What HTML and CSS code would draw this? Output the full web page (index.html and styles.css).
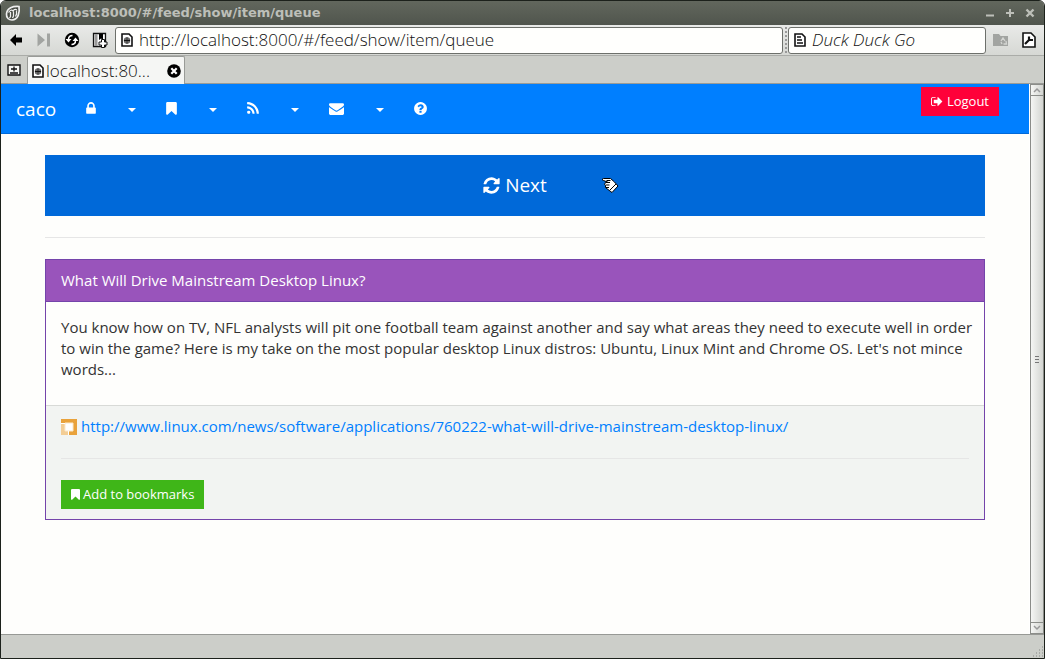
FILE: index.html
```html
<!DOCTYPE html>
<html lang="en">
<head>
<meta charset="utf-8">
<meta name="viewport" content="width=device-width, initial-scale=1">
<title>localhost:8000/#/feed/show/item/queue</title>
<link rel="stylesheet" href="styles.css">
</head>
<body>
<svg class="defs" aria-hidden="true">
  <symbol id="page-globe" viewBox="0 0 12 14"><path d="M1 1h7l3 3v9H1z" fill="#fff" stroke="#111" stroke-width="1.600"/><circle cx="6" cy="7.500" r="3.200" fill="#555"/><path d="M3 7.500h6M6 4.500v6" stroke="#111" stroke-width="1"/><path d="M3.500 6h5M3.500 9h5" stroke="#bbb" stroke-width=".5"/></symbol>
  <symbol id="bookmark" viewBox="256 0 1280 1792"><path fill="currentColor" d="M1420 128q23 0 44 9 33 13 52.500 41t19.500 62v1289q0 34-19.500 62t-52.500 41q-19 8-44 8-48 0-83-32l-441-424-441 424q-36 33-83 33-23 0-44-9-33-13-52.500-41t-19.500-62v-1289q0-34 19.500-62t52.500-41q21-9 44-9h1048z"/></symbol>
</svg>
<div class="window">
  <header class="titlebar">
    <svg class="app-icon" viewBox="0 0 16 16" aria-hidden="true"><path d="M14 1.500C8 1 2 3 1.500 9c-.3 4 2.500 6 5.500 6 6 0 8-7 7-13.500z" fill="#454942" stroke="#eee" stroke-width="1.700"/><path d="M3.500 7.500C5 5 7 4.500 8 6c1.500-2 3-2 4-.5M5.500 7v4.500l-1 1.500M8.500 6.500V11l-1 2M11.500 6v3l-1 2.500" fill="none" stroke="#eee" stroke-width="1.300"/></svg>
    <span class="window-title">localhost:8000/#/feed/show/item/queue</span>
    <button class="win-btn" aria-label="Minimize"><svg viewBox="0 0 10 10"><path d="M1 7.500h8" stroke-width="2"/></svg></button>
    <button class="win-btn" aria-label="Maximize"><svg viewBox="0 0 10 10"><path d="M1 5h8M5 1v8" stroke-width="2"/></svg></button>
    <button class="win-btn" aria-label="Close window"><svg viewBox="0 0 10 10"><path d="M1.500 1.500l7 7M8.500 1.500l-7 7" stroke-width="2.400"/></svg></button>
  </header>
  <div class="toolbar">
    <div class="tools">
      <button class="tool" aria-label="Back"><svg viewBox="0 0 16 16"><path d="M2 8l6-6v3.500h6v5H8V14z"/></svg></button>
      <button class="tool" aria-label="Forward" disabled><svg viewBox="0 0 16 16"><path d="M1.500 1.500L9 8l-7.500 6.500zM11 1.500h3v13h-3z" fill="#a2a4a1"/></svg></button>
      <button class="tool" aria-label="Reload"><svg viewBox="0 0 16 16"><circle cx="8" cy="8" r="7.200"/><path d="M4.500 7.500C4.500 5 6 3.500 8.500 3.500M11.500 8.500c0 2.500-1.500 4-4 4" fill="none" stroke="#fff" stroke-width="1.500"/><path d="M1.500 7h6l-3 3.500zM8.500 9h6l-3-3.500z" fill="#fff"/></svg></button>
      <button class="tool" aria-label="Add bookmark"><svg viewBox="0 0 16 16"><path d="M1.500 1.500h12v13h-12z" fill="#fff" stroke="#111" stroke-width="1.300"/><path d="M2.500 2h3v12h-3z" fill="#999"/><path d="M7 2h4v6L9 6.500 7 8z"/><path d="M9.500 7.500h3V10H15v3h-2.500v2.500h-3V13H7v-3h2.500z" fill="#fff" stroke="#111"/></svg></button>
    </div>
    <label class="field address"><svg viewBox="0 0 12 14" aria-hidden="true"><use href="#page-globe"/></svg><input type="text" aria-label="Address" value="http://localhost:8000/#/feed/show/item/queue"></label>
    <span class="grip"></span>
    <label class="field search"><svg viewBox="0 0 12 14" aria-hidden="true"><path d="M1 1h7l3 3v9H1z" fill="#fff" stroke="#111" stroke-width="1.600"/><path d="M3 4h4M3 7h5M3 10h6" stroke="#111" stroke-width="1.400"/></svg><input type="text" aria-label="Search" placeholder="Duck Duck Go"></label>
    <div class="tools tools-end">
      <button class="tool" aria-label="Restore closed tab" disabled><svg viewBox="0 0 16 16"><path d="M0 2h6l1.500 2H15v10H0z" fill="#a2a4a1"/><path d="M8 9l2-3 2 3M13 9l.5 3h-3M8 10l1 2" fill="none" stroke="#d5d6d3" stroke-width="1.300"/></svg></button>
      <button class="tool" aria-label="Settings"><svg viewBox="0 0 16 16"><path d="M2 1h8l4 4v10H2z" fill="#fff" stroke="#111" stroke-width="1.600"/><path d="M4 12l4-4M8 4.500V8h4" fill="none" stroke="#111" stroke-width="2.200"/></svg></button>
    </div>
  </div>
  <div class="tabbar">
    <button class="new-tab" aria-label="New tab"><svg viewBox="0 0 14 12"><path d="M1 1h12v10H1z" fill="#f6f7f5" stroke="#111" stroke-width="1.400"/><path d="M4 5h6M7 2.500v5M3 9h8" stroke="#111" stroke-width="1.300"/></svg></button>
    <div class="tab">
      <svg class="tab-icon" viewBox="0 0 12 14" aria-hidden="true"><use href="#page-globe"/></svg>
      <span class="tab-title">localhost:80...</span>
      <button class="tab-close" aria-label="Close tab"><svg viewBox="0 0 14 14"><circle cx="7" cy="7" r="6.800"/><path d="M4.300 4.300l5.400 5.400M9.700 4.300L4.300 9.700" stroke="#fff" stroke-width="2.200"/></svg></button>
    </div>
  </div>
  <div class="viewport">
    <div class="page">
      <nav class="navbar">
        <a class="brand" href="#">caco</a>
        <a class="nav-link" href="#" aria-label="Account"><svg width="10" height="15" viewBox="320 0 1152 1792"><path d="M640 768h512v-192q0-106-75-181t-181-75-181 75-75 181v192zm832 96v576q0 40-28 68t-68 28h-960q-40 0-68-28t-28-68v-576q0-40 28-68t68-28h32v-192q0-184 132-316t316-132 316 132 132 316v192h32q40 0 68 28t28 68z"/></svg></a>
        <button class="nav-link" aria-label="Account menu"><span class="caret"></span></button>
        <a class="nav-link" href="#" aria-label="Bookmarks"><svg width="11" height="15"><use href="#bookmark"/></svg></a>
        <button class="nav-link" aria-label="Bookmarks menu"><span class="caret"></span></button>
        <a class="nav-link" href="#" aria-label="Feeds"><svg width="12" height="15" viewBox="192 0 1408 1792"><path d="M576 1344q0 80-56 136t-136 56-136-56-56-136 56-136 136-56 136 56 56 136zm512 123q2 28-17 48-18 21-47 21h-135q-25 0-43-16.500t-20-41.500q-22-229-184.500-391.500t-391.500-184.500q-25-2-41.500-20t-16.500-43v-135q0-29 21-47 17-17 43-17h5q160 13 306 80.500t259 181.500q114 113 181.500 259t80.500 306zm512 2q2 27-18 47-18 20-46 20h-143q-26 0-44.500-17.500t-19.500-42.500q-12-215-101-408.500t-231.500-336-336-231.500-408.500-102q-25-1-42.500-19.500t-17.500-43.500v-143q0-28 20-46 18-18 44-18h3q262 13 501.500 120t425.500 294q187 186 294 425.500t120 501.500z"/></svg></a>
        <button class="nav-link" aria-label="Feeds menu"><span class="caret"></span></button>
        <a class="nav-link" href="#" aria-label="Mail"><svg width="15" height="15" viewBox="0 0 1792 1792"><path d="M1792 710v794q0 66-47 113t-113 47h-1472q-66 0-113-47t-47-113v-794q44 49 101 87 362 246 497 345 57 42 92.500 65.500t94.500 48 110 24.500h2q51 0 110-24.500t94.500-48 92.500-65.500q170-123 498-345 57-39 100-87zm0-294q0 79-49 151t-122 123q-376 261-468 325-10 7-42.500 31t-54 38.500-52 32.500-57.500 27-50 9h-2q-23 0-50-9t-57.500-27-52-32.500-54-38.500-42.500-31q-91-64-262-182.500t-205-142.500q-62-42-117-115.500t-55-136.500q0-78 41.500-130t118.500-52h1472q65 0 112.500 47t47.500 113z"/></svg></a>
        <button class="nav-link" aria-label="Mail menu"><span class="caret"></span></button>
        <a class="nav-link" href="#" aria-label="Help"><svg width="13" height="15" viewBox="128 0 1536 1792"><path d="M1024 1376v-192q0-14-9-23t-23-9h-192q-14 0-23 9t-9 23v192q0 14 9 23t23 9h192q14 0 23-9t9-23zm256-672q0-88-55.500-163t-138.500-116-170-41q-243 0-371 213-15 24 8 42l132 100q7 6 19 6 16 0 25-12 53-68 86-92 34-24 86-24 48 0 85.500 26t37.500 59q0 38-20 61t-68 45q-63 28-115.500 86.500t-52.500 125.500v36q0 14 9 23t23 9h192q14 0 23-9t9-23q0-19 21.500-49.500t54.500-49.500q32-18 49-28.500t46-35 44.500-48 28-60.500 12.500-81zm384 192q0 209-103 385.500t-279.500 279.500-385.500 103-385.500-103-279.500-279.500-103-385.500 103-385.500 279.500-279.500 385.500-103 385.500 103 279.500 279.500 103 385.500z"/></svg></a>
        <button class="btn btn-danger"><svg width="12" height="13" viewBox="64 0 1664 1792"><path d="M704 1440q0 4 1 20t.5 26.500-3 23.500-10 19.500-20.500 6.500h-320q-119 0-203.500-84.500t-84.500-203.500v-704q0-119 84.500-203.500t203.500-84.500h320q13 0 22.500 9.500t9.500 22.500q0 4 1 20t.5 26.500-3 23.500-10 19.500-20.500 6.500h-320q-66 0-113 47t-47 113v704q0 66 47 113t113 47h312l11.500 1 11.500 3 8 5.500 7 9 2 13.500zm928-544q0 26-19 45l-544 544q-19 19-45 19t-45-19-19-45v-288h-448q-26 0-45-19t-19-45v-384q0-26 19-45t45-19h448v-288q0-26 19-45t45-19 45 19l544 544q19 19 19 45z"/></svg><span>Logout</span></button>
      </nav>
      <main class="container">
        <button class="btn-next"><svg width="17" height="19" viewBox="128 0 1536 1792"><path d="M1639 1056q0 5-1 7-64 268-268 434.500t-478 166.500q-146 0-282.500-55t-243.500-157l-129 129q-19 19-45 19t-45-19-19-45v-448q0-26 19-45t45-19h448q26 0 45 19t19 45-19 45l-137 137q71 66 161 102t187 36q134 0 250-65t186-179q11-17 53-117 8-23 30-23h192q13 0 22.500 9.500t9.500 22.500zm25-800v448q0 26-19 45t-45 19h-448q-26 0-45-19t-19-45 19-45l138-138q-148-137-349-137-134 0-250 65t-186 179q-11 17-53 117-8 23-30 23h-199q-13 0-22.500-9.500t-9.500-22.500v-7q65-268 270-434.500t480-166.500q146 0 284 55.500t245 156.500l130-129q19-19 45-19t45 19 19 45z"/></svg><span>Next</span></button>
        <hr>
        <article class="panel">
          <h1 class="panel-heading">What Will Drive Mainstream Desktop Linux?</h1>
          <div class="panel-body">
            <p>You know how on TV, NFL analysts will pit one football team against another and say what areas they need to execute well in order to win the game? Here is my take on the most popular desktop Linux distros: Ubuntu, Linux Mint and Chrome OS. Let's not mince words...</p>
          </div>
          <footer class="panel-footer">
            <div class="source">
              <svg width="16" height="16" viewBox="0 0 16 16" aria-hidden="true"><path d="M0 0h16v16H8V4H0z" fill="#e9a23b"/><path d="M0 4h8v12H0z" fill="#f3cd95"/><path d="M4 4h8v8H4z" fill="#fff" stroke="#fbe8cb"/><path d="M0 4.500h4M7.500 12v4" stroke="#fff"/></svg>
              <a href="http://www.linux.com/news/software/applications/760222-what-will-drive-mainstream-desktop-linux/">http://www.linux.com/news/software/applications/760222-what-will-drive-mainstream-desktop-linux/</a>
            </div>
            <hr>
            <button class="btn btn-success"><svg width="9" height="13"><use href="#bookmark"/></svg><span>Add to bookmarks</span></button>
          </footer>
        </article>
      </main>
    </div>
    <div class="scrollbar" aria-hidden="true">
      <span class="scroll-end"><svg viewBox="0 0 8 6"><path d="M1 5l3-3 3 3"/></svg></span>
      <span class="scroll-thumb"><svg viewBox="0 0 6 8"><path d="M1 1.500h4M1 4.500h4M1 7.500h4"/></svg></span>
      <span class="scroll-end"><svg viewBox="0 0 8 6"><path d="M1 1l3 3 3-3"/></svg></span>
    </div>
  </div>
  <div class="statusbar"><svg width="12" height="12" viewBox="0 0 12 12" aria-hidden="true"><path d="M10 1h1M7 4h1M10 4h1M4 7h1M7 7h1M10 7h1M1 10h1M4 10h1M7 10h1M10 10h1" stroke="#858784"/></svg></div>
  <svg class="pointer" viewBox="0 0 18 18" aria-hidden="true"><path d="M2.500 1.500h7l4 3.500 3.500 4-6 6.500L7 12.500l-2.500-2v-2L3.500 7.500l1-2 2-.5-4-1.500-1.500-1z" fill="#fff" stroke="#000"/><path d="M5.500 3.500h4M5 5.500h4M4.500 8h4M5 10.500h3M15 7l-6 6" fill="none" stroke="#000"/></svg>
</div>
</body>
</html>
```
FILE: styles.css
```css
* { box-sizing: border-box; }

body {
  margin: 0;
  background: #fff;
  color: #333;
  font: 15px/21px "Open Sans", sans-serif;
}

button { margin: 0; padding: 0; border: 0; background: none; font: inherit; color: inherit; }
svg { display: block; fill: currentColor; }
.defs { position: absolute; width: 0; height: 0; }

.window {
  position: relative;
  display: flex;
  flex-direction: column;
  min-height: 100vh;
  border: 1px solid #1c211b;
  border-radius: 6px 6px 0 0;
  background: #cccec9;
  overflow: hidden;
}

/* Browser chrome */
.titlebar {
  display: flex;
  align-items: center;
  gap: 10px;
  height: 24px;
  padding: 0 9px 0 4px;
  background: linear-gradient(#62675d, #50554d);
  color: #bdbfb9;
  font: bold 13px/24px "DejaVu Sans", sans-serif;
}
.app-icon { width: 16px; height: 16px; }
.window-title { flex: 1; margin-left: -2px; }
.win-btn svg { width: 10px; height: 10px; stroke: currentColor; }

.toolbar {
  display: flex;
  align-items: center;
  height: 31px;
  padding: 0 7px;
  border-bottom: 1px solid #aaaca8;
  background: linear-gradient(#e9eae8, #d6d8d4);
}
.tools { display: flex; gap: 12px; margin-right: 7px; }
.tools-end { margin: 0 0 0 7px; }
.tool svg { width: 16px; height: 16px; fill: #000; }
.field {
  display: flex;
  align-items: center;
  gap: 6px;
  height: 27px;
  padding: 0 5px;
  border: 1px solid #6d706b;
  border-radius: 3px;
  background: #fffffd;
}
.field svg { width: 12px; height: 14px; }
.field input {
  flex: 1;
  min-width: 0;
  padding: 0;
  border: 0;
  outline: 0;
  background: none;
  color: #111;
  font: 300 17px/24px "Open Sans", sans-serif;
}
.address { flex: 1; }
.search { width: 198px; }
.search input::placeholder { color: #111; font-style: italic; opacity: 1; }
.grip { height: 26px; margin: 0 1px 0 2px; border-left: 2px dotted #999; }

.tabbar {
  display: flex;
  height: 28px;
  border-bottom: 1px solid #999b97;
}
.new-tab { padding: 0 6px; }
.new-tab svg { width: 14px; height: 12px; }
.tab {
  display: flex;
  align-items: center;
  width: 158px;
  height: 28px;
  padding: 0 3px 0 4px;
  border: 1px solid #999b97;
  border-bottom: 0;
  border-radius: 2px 2px 0 0;
  background: #f5f6f4;
  color: #111;
  font: 300 17px/24px "Open Sans", sans-serif;
}
.tab-icon { width: 12px; height: 14px; margin-right: 2px; }
.tab-title { flex: 1; white-space: nowrap; }
.tab-close svg { width: 14px; height: 14px; fill: #000; }

.viewport { display: flex; flex: 1; }
.page { flex: 1; min-width: 0; background: #fefefc; }
.statusbar {
  display: flex;
  justify-content: flex-end;
  align-items: flex-end;
  height: 24px;
  border-top: 1px solid #979995;
}

.scrollbar {
  display: flex;
  flex-direction: column;
  width: 15px;
  padding-left: 1px;
  background: #fff;
}
.scroll-end, .scroll-thumb {
  display: flex;
  justify-content: center;
  align-items: center;
  border: 1px solid #8b8d89;
  background: linear-gradient(90deg, #f5f6f4, #d3d5d1);
}
.scroll-end { height: 12px; }
.scroll-thumb { flex: 1; border-width: 0 1px; }
.scroll-end svg { width: 8px; height: 6px; fill: none; stroke: #999; stroke-width: 1.5; }
.scroll-thumb svg { width: 6px; height: 8px; stroke: #777; }

/* Application */
.navbar {
  display: flex;
  align-items: stretch;
  height: 50px;
  padding-right: 30px;
  border-bottom: 1px solid #0069d9;
  background: #007fff;
  color: #fff;
}
.brand {
  padding: 15px;
  color: #fff;
  font-size: 19px;
  line-height: 21px;
  text-decoration: none;
}
.nav-link { display: flex; align-items: center; padding: 0 15px; color: #fff; }
.caret {
  margin: 2px 0 0 2px;
  border: 4px solid transparent;
  border-top-color: #fff;
  border-bottom: 0;
}
.btn {
  display: inline-flex;
  align-items: center;
  height: 29px;
  padding: 0 10px;
  color: #fff;
  font-size: 13px;
  line-height: 19px;
}
.btn-danger { gap: 4px; margin: 3px 0 0 auto; background: #ff0039; }
.btn-success { gap: 3px; background: #3fb618; }

.container { max-width: 970px; margin: 0 auto; padding: 21px 15px; }
.btn-next {
  display: flex;
  justify-content: center;
  align-items: center;
  gap: 5px;
  width: 100%;
  padding: 18px;
  background: #0069d9;
  color: #fff;
  font-size: 19px;
  line-height: 25px;
}
hr { margin: 21px 0; border: 0; border-top: 1px solid #e6e6e6; }

.panel { border: 1px solid #7444aa; }
.panel-heading {
  margin: 0;
  padding: 10px 15px;
  border-bottom: 1px solid #7444aa;
  background: #9954bb;
  color: #fff;
  font-size: 15px;
  font-weight: 400;
  line-height: 21px;
}
.panel-body { padding: 15px 8px 15px 15px; }
.panel-body p { margin: 0 0 10px; }
.panel-footer { padding: 10px 15px; border-top: 1px solid #d8dad7; background: #f2f4f2; }
.panel-footer .btn { display: flex; }
.source { display: flex; align-items: center; gap: 4px; }
.source a { color: #007fff; text-decoration: none; }

.pointer { position: absolute; left: 600px; top: 176px; width: 18px; height: 18px; }
```
